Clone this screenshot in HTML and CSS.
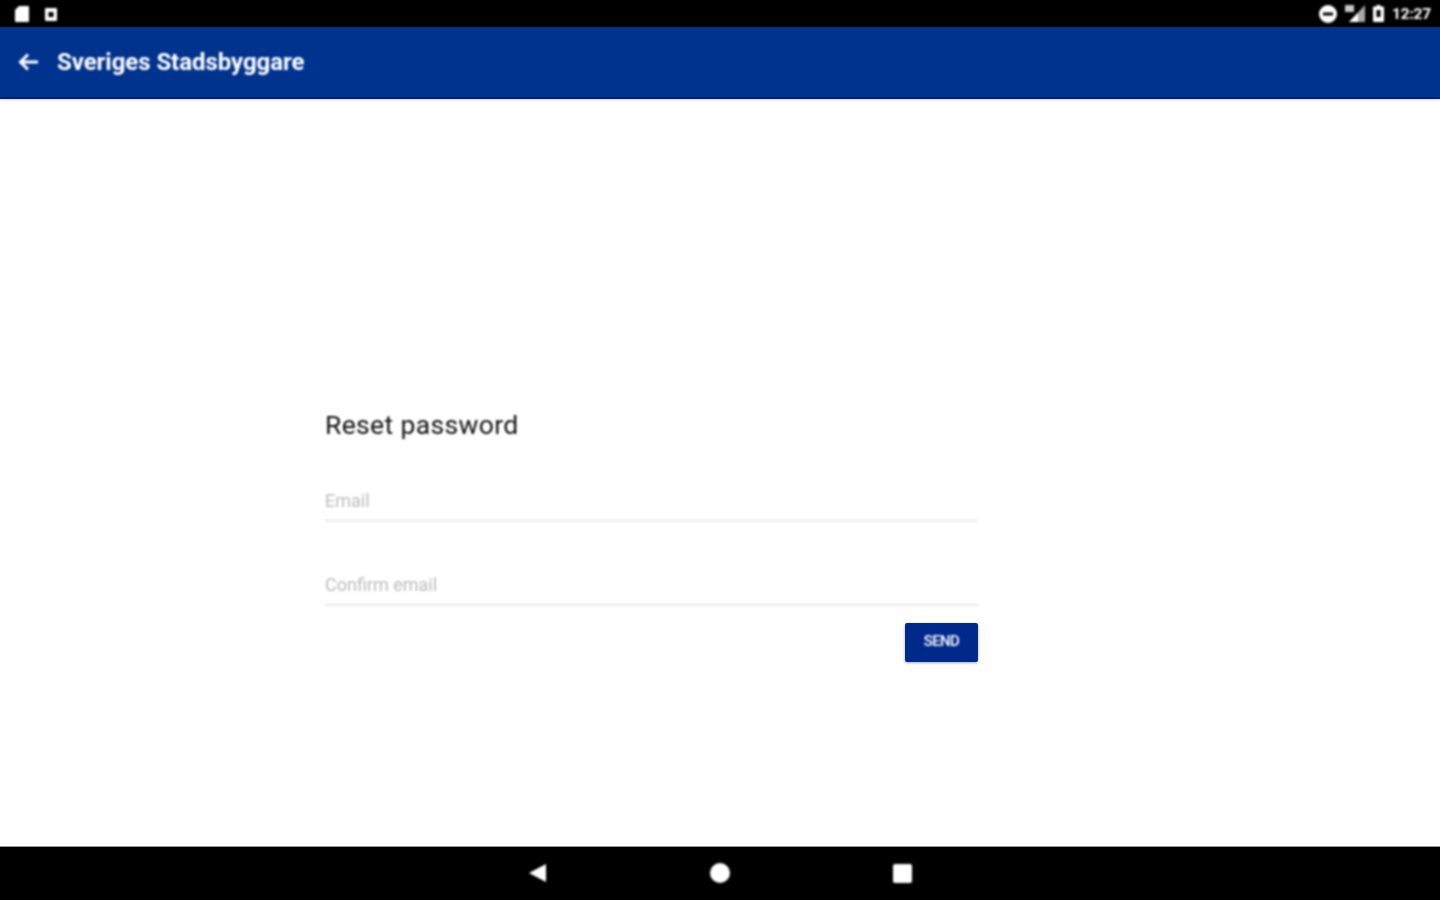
FILE: index.html
```html
<!DOCTYPE html>
<html lang="en">
<head>
<meta charset="utf-8">
<title>Sveriges Stadsbyggare</title>
<link rel="stylesheet" href="styles.css">
</head>
<body>
<div class="screen">
  <div class="status-bar">
    <div class="status-group">
      <svg class="icon-sd" width="15" height="16" viewBox="0 0 15 16"><path d="M5 0h9a1 1 0 0 1 1 1v14a1 1 0 0 1-1 1H2a1 1 0 0 1-1-1V4z" fill="#fff"/></svg>
      <svg class="icon-photo" width="12" height="13" viewBox="0 0 12 13"><path fill-rule="evenodd" d="M1 0h10a1 1 0 0 1 1 1v11a1 1 0 0 1-1 1H1a1 1 0 0 1-1-1V1a1 1 0 0 1 1-1zm2.500 4v5h5V4z" fill="#fff"/></svg>
    </div>
    <div class="status-group status-right">
      <svg class="icon-dnd" width="18" height="18" viewBox="0 0 18 18"><path fill-rule="evenodd" d="M9 0a9 9 0 1 1 0 18A9 9 0 0 1 9 0zM4 7.500v3h10v-3z" fill="#fff"/></svg>
      <svg class="icon-signal" width="20" height="17" viewBox="0 0 20 17"><path d="M20 0v17H4z" fill="#a8a8a8"/><path d="M13 8v9H4z" fill="#fff"/><path d="M0 0h9v7H0z" fill="#c8c8c8"/></svg>
      <svg class="icon-battery" width="11" height="17" viewBox="0 0 11 17"><path fill-rule="evenodd" d="M3.500 0h4v1.500H10a1 1 0 0 1 1 1V16a1 1 0 0 1-1 1H1a1 1 0 0 1-1-1V2.500a1 1 0 0 1 1-1h2.500zM3.500 5v7h4V5z" fill="#fff"/></svg>
      <span class="clock">12:27</span>
    </div>
  </div>
  <header class="app-bar">
    <svg class="icon-back" width="22" height="20" viewBox="0 0 22 20"><path d="M21 10H4M11 2.500 3.500 10l7.500 7.500" fill="none" stroke="#fff" stroke-width="3"/></svg>
    <h1 class="app-title">Sveriges Stadsbyggare</h1>
  </header>
  <main class="content">
    <form class="reset-form">
      <h2 class="form-title">Reset password</h2>
      <div class="field field-first"><span class="placeholder">Email</span></div>
      <div class="field field-second"><span class="placeholder">Confirm email</span></div>
      <div class="actions"><button class="send" type="button"><span class="send-label">SEND</span></button></div>
    </form>
  </main>
  <nav class="nav-bar">
    <svg class="nav-back" width="20" height="20" viewBox="0 0 20 20"><path d="M18 1v18L1 10z" fill="#fff"/></svg>
    <span class="nav-circle"></span>
    <span class="nav-square"></span>
  </nav>
</div>
</body>
</html>
```

FILE: styles.css
```css
* { box-sizing: border-box; }
html, body { margin: 0; padding: 0; }
body { font-family: Roboto, "Liberation Sans", sans-serif; background: #fff; }
.screen { width: 1440px; height: 900px; display: flex; flex-direction: column; overflow: hidden; }
.status-bar { height: 27px; flex: none; background: #000; display: flex; justify-content: space-between; align-items: center; padding: 0 9px 0 14px; color: #fff; }
.status-group { display: flex; align-items: center; gap: 16px; }
.status-right { gap: 8px; }
.icon-photo { margin-top: 1px; }
.clock { font-size: 15.500px; font-weight: 700; letter-spacing: -0.2px; filter: blur(0.8px); }
.status-group svg { filter: blur(0.8px); }
.app-bar { height: 72px; flex: none; background: #00338d; border-bottom: 2px solid #00227a; display: flex; align-items: center; padding: 0 0 0 17px; gap: 18px; box-shadow: 0 1px 2px rgba(0,0,0,.2); }
.icon-back { filter: blur(0.8px); }
.app-title { margin: 0; font-size: 24px; font-weight: 700; color: #fff; letter-spacing: -0.05px; filter: blur(0.8px); }
.content { flex: 1; padding: 310px 0 0 325px; }
.reset-form { width: 653px; display: flex; flex-direction: column; }
.form-title { margin: 0; font-size: 26.500px; line-height: 32px; font-weight: 400; color: #111; letter-spacing: 0.35px; filter: blur(0.8px); }
.field { height: 37px; border-bottom: 3px solid #f4f4f4; box-shadow: 0 1px 1px #fafafa; display: flex; align-items: flex-start; }
.field-first { margin-top: 44px; }
.field-second { margin-top: 47px; }
.placeholder { font-size: 18px; line-height: 20px; color: #bbb; margin-top: 6px; filter: blur(0.8px); }
.actions { display: flex; justify-content: flex-end; margin-top: 17px; }
.send { width: 73px; height: 39px; border: 0; border-radius: 2px; background: #00298c; color: #fff; font-family: inherit; font-size: 15px; font-weight: 500; letter-spacing: -0.6px; padding: 0 0 3px; box-shadow: 0 1px 3px rgba(0,0,0,.35); }
.send-label { display: inline-block; filter: blur(0.8px); }
.nav-bar { height: 54px; flex: none; background: #000; border-top: 1px solid #999; display: flex; align-items: center; padding: 0 0 1px 528px; }
.nav-back { filter: blur(0.8px); }
.nav-circle { width: 20px; height: 20px; border-radius: 50%; background: #fff; margin-left: 162px; filter: blur(0.8px); }
.nav-square { width: 19px; height: 19px; border-radius: 2px; background: #fff; margin-left: 163px; filter: blur(0.8px); }
```
